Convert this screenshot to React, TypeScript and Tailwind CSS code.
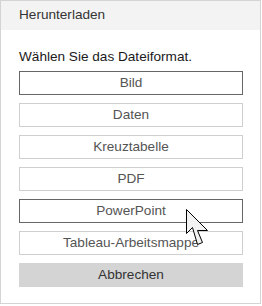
import React from 'react';

const formats = [
  { label: 'Bild', active: true },
  { label: 'Daten', active: false },
  { label: 'Kreuztabelle', active: false },
  { label: 'PDF', active: false },
  { label: 'PowerPoint', active: true },
  { label: 'Tableau-Arbeitsmappe', active: false },
];

const Cursor = () => (
  <svg
    className="absolute left-[185px] top-[208px]"
    width="26"
    height="40"
    viewBox="0 0 26 40"
  >
    <path
      d="M1.5 1.5 L1.5 25.5 L7.5 19.5 L12.5 36.5 L17.5 34.5 L12.5 22.5 L22.5 22.5 Z"
      fill="#f2f2f2"
      stroke="#000"
      strokeWidth="1"
      strokeLinejoin="miter"
    />
  </svg>
);

const App = () => {
  return (
    <div className="relative w-[262px] h-[306px] bg-white font-['Liberation_Sans',Arial,sans-serif]">
      <div className="w-[261px] h-[304px] border border-[#d4d4d4] bg-white">
        {/* Header */}
        <div className="h-[29px] bg-[#f3f3f3] px-[18px] flex items-center text-[13.6px] text-[#333]">
          Herunterladen
        </div>

        {/* Body */}
        <div className="px-[18px] pt-[19px]">
          <p className="text-[13.6px] leading-[16px] text-[#1a1a1a] mb-[6px]">Wählen Sie das Dateiformat.</p>
          <div className="flex flex-col gap-[8px]">
            {formats.map((f) => (
              <button
                key={f.label}
                className={`w-[224px] h-[24px] bg-white border text-[13.6px] text-[#555] flex items-center justify-center ${
                  f.active ? 'border-[#666]' : 'border-[#cfcfcf]'
                }`}
              >
                {f.label}
              </button>
            ))}
            <button className="w-[224px] h-[24px] bg-[#d4d4d4] text-[13.6px] text-[#333] flex items-center justify-center">
              Abbrechen
            </button>
          </div>
        </div>
      </div>
      <Cursor />
    </div>
  );
};

export default App;
